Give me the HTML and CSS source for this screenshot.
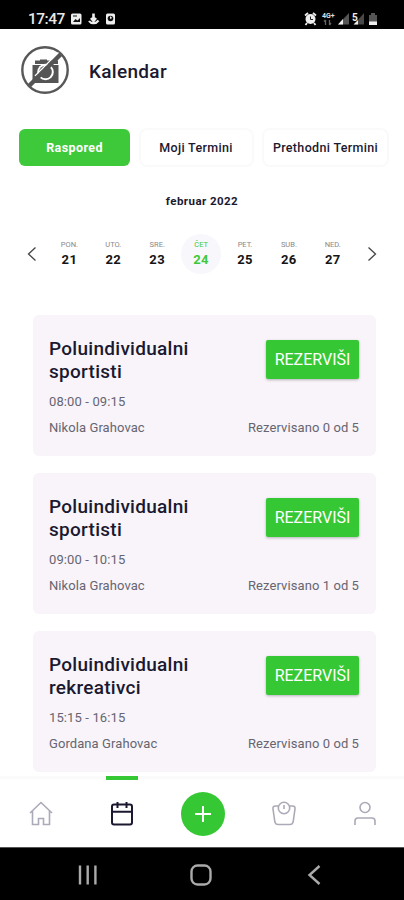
FILE: index.html
```html
<!DOCTYPE html>
<html lang="sr-Latn">
<head>
<meta charset="utf-8">
<title>Kalendar</title>
<link rel="stylesheet" href="styles.css">
</head>
<body>
<div class="status">
  <span class="clock">17:47</span>
  <svg class="st-left" width="48" height="14" viewBox="0 0 48 14">
    <rect x="1" y="1.500" width="10.500" height="11" rx="1.500" fill="#eee"/><path d="M3 10l2.500-3 2 1.500L10 6v4z" fill="#111"/><path d="M3 4h4" stroke="#111"/>
    <path d="M23.500 1.500v6M21 6l2.500 3L26 6" stroke="#eee" stroke-width="2.600" fill="none"/><path d="M19 9c2 3 7 3 9.500-.5" stroke="#eee" stroke-width="2.200" fill="none"/>
    <rect x="36" y="1.500" width="9" height="11" rx="1.500" fill="#eee"/><circle cx="40.500" cy="6.500" r="2.800" fill="#111"/><path d="M40.500 4.500v2l1.500-1" stroke="#eee" fill="none"/>
  </svg>
  <svg class="st-right" width="76" height="14" viewBox="0 0 76 14">
    <circle cx="6.500" cy="7" r="5" fill="#eee"/><path d="M1 3.500l3-2.500M12 3.500L9 1M3 11l-1.500 2M10 11l1.500 2" stroke="#eee" stroke-width="1.800"/><path d="M6.500 4.500v3H9" stroke="#222" fill="none"/>
    <text x="18" y="6" class="net">4G+</text><path d="M21.500 13V8M20 9.500L21.500 8M25.500 8v5M25.500 13l1.500-2" stroke="#666" stroke-width="1.300" fill="none"/>
    <path d="M34 12.500L45 1v11.500z" fill="#555"/><path d="M34 12.500L39 7v5.500z" fill="#eee"/>
    <text x="48" y="9" class="five">5</text><path d="M50 12.500L60 1v11.500z" fill="#666" opacity=".7"/><path d="M49.500 12.500L54 8v4.500z" fill="#eee"/>
    <path d="M65 3h2V1h4v2h2v10h-8z" fill="#555"/><path d="M65 9.500h8V13h-8z" fill="#eee"/>
  </svg>
</div>
<header class="header">
  <svg width="50" height="50" viewBox="0 0 50 50">
    <circle cx="25" cy="25" r="22.700" fill="#fff" stroke="#585858" stroke-width="2.400"/>
    <path d="M15 15.500h5v-1h7v1h11v3.500H15zM12.500 20h26v18h-26z" fill="#555"/>
    <circle cx="25.500" cy="27" r="8.300" fill="#fff"/><circle cx="25.500" cy="27" r="6.300" fill="#555"/>
    <path d="M22 27.500a4 4 0 0 1 4-4" stroke="#fff" stroke-width="1.400" fill="none"/>
    <path d="M15 31L38.500 7.500" stroke="#fff" stroke-width="1.500"/>
    <path d="M9.500 40.500L40.500 9.500" stroke="#555" stroke-width="4.500"/>
  </svg>
  <h1>Kalendar</h1>
</header>
<nav class="tabs">
  <a class="tab on">Raspored</a>
  <a class="tab">Moji Termini</a>
  <a class="tab">Prethodni Termini</a>
</nav>
<div class="month">februar 2022</div>
<div class="week">
  <svg class="arrow" width="10" height="16" viewBox="0 0 10 16"><path d="M8.500 1.500L1.500 8l7 6.500"/></svg>
  <div class="day"><small>PON.</small><b>21</b></div>
  <div class="day"><small>UTO.</small><b>22</b></div>
  <div class="day"><small>SRE.</small><b>23</b></div>
  <div class="day sel"><small>ČET</small><b>24</b></div>
  <div class="day"><small>PET.</small><b>25</b></div>
  <div class="day"><small>SUB.</small><b>26</b></div>
  <div class="day"><small>NED.</small><b>27</b></div>
  <svg class="arrow" width="10" height="16" viewBox="0 0 10 16"><path d="M1.500 1.500l7 6.500-7 6.500"/></svg>
</div>
<main class="list">
  <article class="card">
    <div class="top"><h2>Poluindividualni<br>sportisti</h2><button>REZERVIŠI</button></div>
    <div class="time">08:00 - 09:15</div>
    <div class="meta"><span>Nikola Grahovac</span><span>Rezervisano 0 od 5</span></div>
  </article>
  <article class="card">
    <div class="top"><h2>Poluindividualni<br>sportisti</h2><button>REZERVIŠI</button></div>
    <div class="time">09:00 - 10:15</div>
    <div class="meta"><span>Nikola Grahovac</span><span>Rezervisano 1 od 5</span></div>
  </article>
  <article class="card">
    <div class="top"><h2>Poluindividualni<br>rekreativci</h2><button>REZERVIŠI</button></div>
    <div class="time">15:15 - 16:15</div>
    <div class="meta"><span>Gordana Grahovac</span><span>Rezervisano 0 od 5</span></div>
  </article>
</main>
<nav class="bottom">
  <a><svg width="24" height="26" viewBox="0 0 24 26" class="ic"><path d="M1 12L12 1.500 23 12M3.500 10v13.500H9.500v-6h5v6h6V10"/></svg></a>
  <a class="active"><svg width="24" height="26" viewBox="0 0 24 26" class="ic dark"><rect x="2" y="3.500" width="20" height="20" rx="2"/><path d="M2 10.800h20M7.500 1v6M16.500 1v6"/></svg></a>
  <a><span class="plus"><svg width="18" height="18" viewBox="0 0 18 18"><path d="M9 1v16M1 9h16" stroke="#fff" stroke-width="2"/></svg></span></a>
  <a><svg width="26" height="26" viewBox="0 0 26 26" class="ic"><path d="M7.500 5H4.500C2.500 5 1.700 6 2 8l1.800 12.500c.3 2 1.300 3 3.200 3h12c1.900 0 2.900-1 3.200-3L24 8c.3-2-.5-3-2.500-3h-3"/><circle cx="13" cy="7" r="5.700"/><path d="M13 4v4"/></svg></a>
  <a><svg width="24" height="26" viewBox="0 0 24 26" class="ic"><circle cx="12" cy="6.500" r="5"/><path d="M2 24v-4c0-2 1-3 3-3h14c2 0 3 1 3 3v4"/></svg></a>
</nav>
<div class="sys">
  <svg width="20" height="20" viewBox="0 0 20 20"><path d="M2 .5v19M9.700.5v19M17.400.5v19"/></svg>
  <svg width="22" height="22" viewBox="0 0 22 22"><rect x="1.500" y="1.500" width="19" height="19" rx="6"/></svg>
  <svg width="14" height="20" viewBox="0 0 14 20"><path d="M12.500 1L2.500 10l10 9"/></svg>
</div>
</body>
</html>
```

FILE: styles.css
```css
* { box-sizing: border-box; }
body {
  margin: 0;
  width: 404px;
  height: 900px;
  overflow: hidden;
  display: flex;
  flex-direction: column;
  background: #fff;
  font-family: Roboto, sans-serif;
  color: #1b1930;
}
h1, h2 { margin: 0; font-weight: 500; }
.status {
  flex: none;
  height: 29px;
  background: #000;
  display: flex;
  align-items: center;
  padding: 8px 24px 0 28px;
}
.clock { font-size: 15.500px; line-height: 20px; color: #e8e8e8; width: 42px; white-space: nowrap; letter-spacing: -.5px; font-weight: 500; }
.st-right { margin-left: auto; }
.net { font: 700 7px Roboto, sans-serif; fill: #ddd; }
.five { font: 700 10px Roboto, sans-serif; fill: #eee; }
.header { flex: none; height: 99px; padding: 16px 20px 0; display: flex; align-items: flex-start; gap: 19px; }
h1 { font-size: 19px; line-height: 24px; margin-top: 15px; letter-spacing: .3px; }
.tabs { flex: none; height: 39px; padding: 0 15px 0 19px; display: grid; grid-template-columns: 111px 115px 127px; gap: 8.500px; }
.tab { display: flex; align-items: center; justify-content: center; border: 2px solid #fafafb; border-radius: 8px; font-size: 12.500px; font-weight: 500; white-space: nowrap; letter-spacing: .33px; }
.tab.on { margin: 1px 0; border: 0; background: #3ec93a; color: #fff; border-radius: 6px; font-weight: 700; letter-spacing: .4px; }
.month { flex: none; text-align: center; font-size: 11.500px; font-weight: 700; line-height: 16px; margin-top: 26px; letter-spacing: .45px; }
.week { flex: none; height: 40px; margin-top: 25px; padding: 0 26px; display: flex; align-items: center; }
.arrow { flex: none; margin: 0 1px; }
.arrow path { fill: none; stroke: #444; stroke-width: 1.300; }
.day { flex: none; width: 43.900px; height: 40px; display: flex; flex-direction: column; align-items: center; padding-top: 6px; color: #151515; }
.week .arrow:first-child + .day { margin-left: 9.500px; }
.day + .arrow { margin-left: auto; }
.day small { font-size: 7.500px; line-height: 10px; color: #888; }
.day b { font-size: 13px; line-height: 16px; font-weight: 700; margin-top: 2px; letter-spacing: .4px; }
.day.sel { width: 40px; margin: 0 1.950px; border-radius: 50%; background: #f7f7fc; }
.day.sel, .day.sel small { color: #3ec93a; }
.list { flex: 1; min-height: 0; overflow: hidden; padding: 41px 28px 0 33px; }
.card { height: 141px; margin-bottom: 17px; padding: 22px 17px 0 16px; background: #f8f4fa; border-radius: 6px; color: #666570; }
.top { display: flex; justify-content: space-between; height: 57px; }
h2 { font-size: 19px; line-height: 23px; color: #1b1930; letter-spacing: .28px; }
button { width: 93px; height: 39px; margin: 3px 0 0; border: 0; padding: 0; border-radius: 2px; background: #36c834; color: #fff; font: 400 16px Roboto, sans-serif; box-shadow: 0 1px 3px #0004; }
.time { font-size: 13px; line-height: 16px; letter-spacing: .12px; }
.meta { display: flex; justify-content: space-between; font-size: 13px; line-height: 16px; margin-top: 10px; letter-spacing: .08px; }
.bottom { flex: none; height: 71px; border-top: 3px solid #fafafa; background: #fff; display: grid; grid-template-columns: repeat(5, 81px); padding-top: 1px; }
.bottom a { display: flex; align-items: center; justify-content: center; position: relative; }
.active::before { content: ""; position: absolute; top: -4px; left: 25px; width: 32px; height: 4px; background: #36c834; }
.ic { fill: none; stroke: #aaaab8; stroke-width: 1.600; }
.dark { stroke: #1b1930; stroke-width: 2; }
.plus { width: 44px; height: 44px; border-radius: 50%; background: #36c834; display: flex; align-items: center; justify-content: center; }
.sys { flex: none; height: 53px; background: #000; border-top: 1px solid #555; display: flex; align-items: center; padding: 2px 0 0 78px; }
.sys svg { fill: none; stroke: #aaa; stroke-width: 2.400; }
.sys svg:nth-child(2) { margin: 0 95px 0 92px; }
```
